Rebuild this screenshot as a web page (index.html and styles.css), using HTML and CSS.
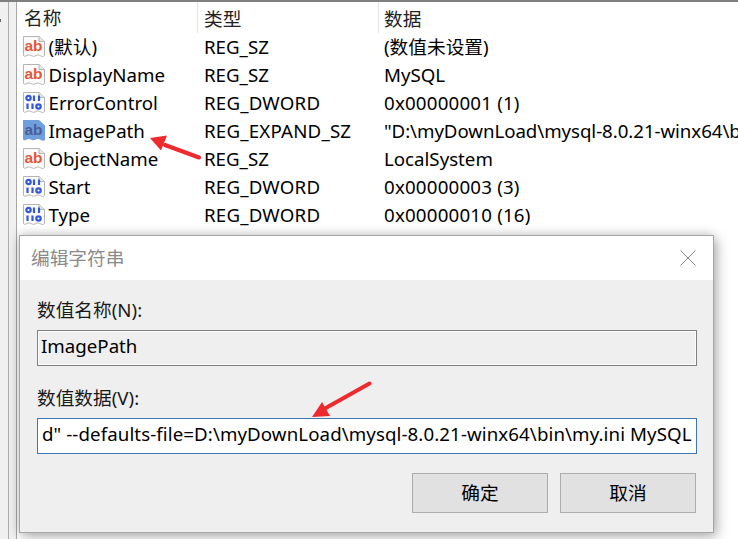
FILE: index.html
```html
<!DOCTYPE html>
<html lang="zh-CN">
<head>
<meta charset="utf-8">
<title>编辑字符串</title>
<link rel="stylesheet" href="styles.css">
</head>
<body>
<svg class="defs" width="0" height="0" aria-hidden="true">
  <symbol id="doc" viewBox="0 0 24 24">
    <path d="M1.500 1.500H17L22.500 6.500V20.500C20 23.500 17.500 18.500 14 20.500C10.500 23 8 18.500 5 20.500C3.500 21.500 2.500 21.500 1.500 20.500Z" fill="#fbfbfb" stroke="#b4b4b4"/>
    <path d="M17 1.500V6.500H22.500" fill="#e8e8e8" stroke="#b4b4b4"/>
  </symbol>
  <symbol id="bin" viewBox="0 0 24 24">
    <use href="#doc"/>
    <g fill="none" stroke="#3558d8" stroke-width="2.200">
      <circle cx="6.500" cy="7" r="2.200"/><path d="M12 4.500V10M17 4.500V10"/>
      <path d="M5.500 12.500V18M10.500 12.500V18"/><circle cx="16.500" cy="15.500" r="2.200"/>
    </g>
  </symbol>
</svg>
<div class="viewer">
  <div class="tree"><span class="tick"></span></div>
  <div class="list">
    <div class="head">
      <div class="c1">名称</div><div class="c2">类型</div><div class="c3">数据</div>
    </div>
    <div class="row"><div class="c1"><svg class="ico" viewBox="0 0 24 24"><use href="#doc"/><text class="ab" x="2.500" y="15.500">ab</text></svg>(默认)</div><div class="c2">REG_SZ</div><div class="c3">(数值未设置)</div></div>
    <div class="row"><div class="c1"><svg class="ico" viewBox="0 0 24 24"><use href="#doc"/><text class="ab" x="2.500" y="15.500">ab</text></svg>DisplayName</div><div class="c2">REG_SZ</div><div class="c3">MySQL</div></div>
    <div class="row"><div class="c1"><svg class="ico" viewBox="0 0 24 24"><use href="#bin"/></svg>ErrorControl</div><div class="c2 wide">REG_DWORD</div><div class="c3 wide">0x00000001 (1)</div></div>
    <div class="row"><div class="c1"><svg class="ico" viewBox="0 0 24 24"><path d="M1 1H17L23 6.500V21C20 23.500 17.500 18.500 14 20.500C10.500 23 8 18.500 5 20.500C3.500 21.500 2 21.500 1 20.500Z" fill="#6f9fdc"/><text class="ab sel" x="2.500" y="15.500">ab</text></svg>ImagePath</div><div class="c2 wide">REG_EXPAND_SZ</div><div class="c3 path">"D:\myDownLoad\mysql-8.0.21-winx64\b</div></div>
    <div class="row"><div class="c1"><svg class="ico" viewBox="0 0 24 24"><use href="#doc"/><text class="ab" x="2.500" y="15.500">ab</text></svg>ObjectName</div><div class="c2">REG_SZ</div><div class="c3">LocalSystem</div></div>
    <div class="row"><div class="c1"><svg class="ico" viewBox="0 0 24 24"><use href="#bin"/></svg>Start</div><div class="c2 wide">REG_DWORD</div><div class="c3 wide">0x00000003 (3)</div></div>
    <div class="row"><div class="c1"><svg class="ico" viewBox="0 0 24 24"><use href="#bin"/></svg>Type</div><div class="c2 wide">REG_DWORD</div><div class="c3 wide">0x00000010 (16)</div></div>
  </div>
</div>

<section class="dialog">
  <header class="titlebar">
    <span class="title">编辑字符串</span>
    <svg class="close" width="16" height="16" viewBox="0 0 16 16"><path d="M.5 .5L15.500 15.500M15.500 .5L.5 15.500" stroke="#8a8a8a" fill="none"/></svg>
  </header>
  <div class="body">
    <div class="label">数值名称(N):</div>
    <div class="field readonly">ImagePath</div>
    <div class="label second">数值数据(V):</div>
    <div class="field active">d" --defaults-file=D:\myDownLoad\mysql-8.0.21-winx64\bin\my.ini MySQL</div>
    <div class="buttons">
      <div class="btn">确定</div>
      <div class="btn">取消</div>
    </div>
  </div>
</section>

<svg class="arrows" width="738" height="539" viewBox="0 0 738 539" aria-hidden="true">
  <path d="M199 157.500L165 145" stroke="#ee2a2e" stroke-width="4" stroke-linecap="round"/>
  <path d="M150 138L167 135.500L161 150.500Z" fill="#ee2a2e"/>
  <path d="M369.500 383.500L324 409" stroke="#ee2a2e" stroke-width="4" stroke-linecap="round"/>
  <path d="M312 417L322 402L330 416Z" fill="#ee2a2e"/>
</svg>
</body>
</html>
```
FILE: styles.css
```css
* { box-sizing: border-box; }
html, body { margin: 0; padding: 0; }
body {
  width: 738px;
  height: 539px;
  overflow: hidden;
  position: relative;
  background: #fff;
  color: #000;
  font-family: "Noto Sans", "Noto Sans CJK SC", sans-serif;
  font-size: 18.700px;
}
.defs { position: absolute; }
.viewer {
  display: flex;
  height: 539px;
  border-top: 2px solid #7f7f7f;
}
.tree {
  width: 17px;
  flex: none;
  position: relative;
  background: #f0f0f0;
  border-right: 1px solid #a8a8a8;
  box-shadow: inset -7px 0 0 #f0f0f0, inset -8px 0 0 #adadad;
}
.tick { position: absolute; left: 0; top: 17px; width: 1px; height: 3px; background: #666; }
.list { flex: 1; min-width: 0; padding-left: 5px; }
.head, .row { display: flex; white-space: nowrap; }
.head { height: 31px; line-height: 34px; color: #222; }
.row { height: 28px; line-height: 28px; }
.c1 { width: 182px; flex: none; display: flex; align-items: center; }
.c2 { width: 180px; flex: none; }
.wide { letter-spacing: .2px; }
.path { letter-spacing: -.06px; }
.head .c1 { width: 176px; padding-left: 2px; border-right: 1px solid #e3e3e3; height: 31px; }
.head .c2 { width: 181px; padding-left: 6px; border-right: 1px solid #e3e3e3; height: 31px; }
.head .c3 { padding-left: 5px; }
.ico { width: 24px; height: 24px; flex: none; margin-right: 2.500px; }
.ab {
  font-family: "Liberation Sans", sans-serif;
  font-weight: 700;
  font-size: 15.500px;
  fill: #e2583a;
}
.ab.sel { fill: #4b5f96; }

.dialog {
  position: absolute;
  left: 19px;
  top: 235px;
  width: 695px;
  height: 298px;
  border: 1px solid #a6a6a6;
  background: #efefef;
  box-shadow: 3px 4px 12px rgba(0,0,0,.28), -1px -1px 10px rgba(0,0,0,.14);
  display: flex;
  flex-direction: column;
}
.titlebar {
  height: 44px;
  flex: none;
  background: #fff;
  display: flex;
  align-items: center;
  justify-content: space-between;
  padding: 0 17px 0 11px;
}
.title { color: #8a8a8a; position: relative; top: -2px; }
.body { flex: 1; padding: 17px 16px 0 17px; }
.label { height: 26px; line-height: 26px; color: #1a1a1a; margin-bottom: 7px; }
.label.second { margin-top: 19px; margin-bottom: 7px; }
.field {
  height: 36px;
  line-height: 29px;
  padding-left: 3px;
  white-space: nowrap;
  overflow: hidden;
}
.readonly { border: 1px solid #808080; box-shadow: inset 0 0 0 1px #fbfbfb; background: #efefef; }
.active { border: 1px solid #3f78b0; background: #fff; padding-left: 4px; letter-spacing: .09px; }
.buttons { display: flex; justify-content: flex-end; gap: 12px; margin-top: 19px; padding-right: 1px; }
.btn {
  width: 136px;
  height: 40px;
  line-height: 38px;
  text-align: center;
  background: #e1e1e1;
  border: 1px solid #adadad;
}
.arrows { position: absolute; left: 0; top: 0; pointer-events: none; }
```
